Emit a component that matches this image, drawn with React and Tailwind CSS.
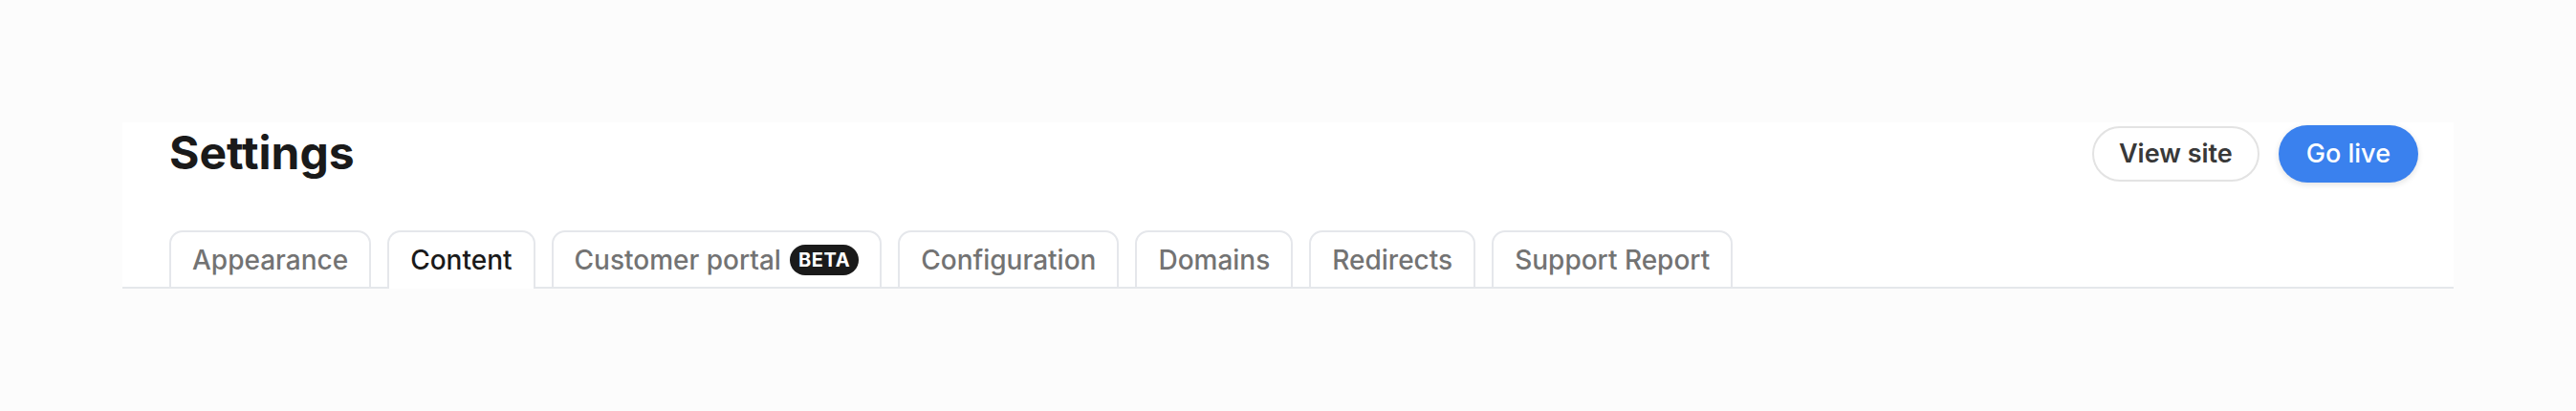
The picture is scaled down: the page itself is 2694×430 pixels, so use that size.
import React from "react";

const tabs = [
  { label: "Appearance" },
  { label: "Content", active: true },
  { label: "Customer portal", beta: true },
  { label: "Configuration" },
  { label: "Domains" },
  { label: "Redirects" },
  { label: "Support Report" },
];

export default function App() {
  return (
    <div
      className="min-h-[430px] bg-[#fcfcfc] px-[128px] pt-[128px]"
      style={{ fontFamily: "Inter, 'Noto Sans', sans-serif" }}
    >
      <div className="bg-white border-b-2 border-[#e5e7eb] pl-[49px] pr-[37px]">
        <div className="flex items-center justify-between pt-[3px] h-[63px]">
          <h1 className="text-[48px] leading-none font-bold text-[#1a1a1a] -mt-[2px]">
            Settings
          </h1>
          <div className="flex items-center gap-[20px]">
            <button className="h-[58px] px-[26px] rounded-full border-2 border-[#e3e3e3] bg-white text-[27px] font-semibold text-[#383838]">
              View site
            </button>
            <button className="h-[60px] px-[29px] rounded-full bg-[#3a81ee] text-[27px] font-medium text-white shadow-[0_2px_6px_rgba(0,0,0,0.12)]">
              Go live
            </button>
          </div>
        </div>
        <div className="flex items-end gap-[17px] mt-[50px]">
          {tabs.map((t) => (
            <div
              key={t.label}
              className={
                "-mb-[2px] flex items-center gap-[9px] px-[22px] rounded-t-[14px] border-2 border-[#e5e7eb] bg-white text-[28px] font-medium " +
                (t.active
                  ? "text-[#1a1a1a] h-[61px] border-b-0 pb-[2px]"
                  : "text-[#737373] h-[61px]")
              }
            >
              <span>{t.label}</span>
              {t.beta && (
                <span className="h-[32px] px-[9px] rounded-full bg-[#1a1a1a] text-white text-[20px] font-bold tracking-[0.03em] flex items-center leading-none">
                  BETA
                </span>
              )}
            </div>
          ))}
        </div>
      </div>
    </div>
  );
}
